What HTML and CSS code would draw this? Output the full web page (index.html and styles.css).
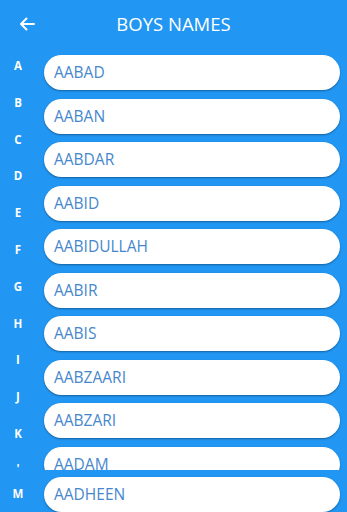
FILE: index.html
```html
<!DOCTYPE html>
<html>
<head>
<meta charset="utf-8">
<link rel="stylesheet" href="styles.css">
</head>
<body>
<div class="app">
  <header class="bar">
    <div class="back">
      <svg width="16" height="14" viewBox="0 0 16 14"><path d="M15 7H2M7.5 1.5L2 7l5.5 5.5" fill="none" stroke="#fff" stroke-width="2" stroke-linecap="round" stroke-linejoin="round"/></svg>
    </div>
    <h1 class="title">BOYS NAMES</h1>
    <div></div>
  </header>
  <div class="scroller">
    <div class="letters">
      <span>A</span><span>B</span><span>C</span><span>D</span><span>E</span><span>F</span><span>G</span><span>H</span><span>I</span><span>J</span><span>K</span><span class="cut">'</span>
    </div>
    <div class="list">
      <div class="card">AABAD</div>
      <div class="card">AABAN</div>
      <div class="card">AABDAR</div>
      <div class="card">AABID</div>
      <div class="card">AABIDULLAH</div>
      <div class="card">AABIR</div>
      <div class="card">AABIS</div>
      <div class="card">AABZAARI</div>
      <div class="card">AABZARI</div>
      <div class="card">AADAM</div>
    </div>
  </div>
  <div class="bottom">
    <div class="letters"><span>M</span></div>
    <div class="list"><div class="card">AADHEEN</div></div>
  </div>
</div>
</body>
</html>
```
FILE: styles.css
```css
html, body { margin: 0; padding: 0; }
body { background: #2196f3; font-family: "Open Sans", "Noto Sans", sans-serif; }
.app { width: 347px; height: 512px; overflow: hidden; }
.bar { height: 48px; display: grid; grid-template-columns: 1fr auto 1fr; align-items: center; }
.back { padding-left: 19px; display: flex; align-items: center; padding-bottom: 1px; }
.title { margin: 0; color: #fff; font-weight: 400; font-size: 18.5px; letter-spacing: 0; padding-bottom: 2px; }
.scroller { height: 422px; overflow: hidden; display: flex; }
.letters { width: 36px; display: flex; flex-direction: column; }
.letters span { height: 36.8px; line-height: 36.8px; text-align: center; color: #fff; font-weight: 700; font-size: 11.5px; }
.letters .cut { line-height: 32px; font-size: 11.5px; }
.list { flex: 1; display: flex; flex-direction: column; gap: 8.5px; padding-top: 7px; padding-left: 8px; padding-right: 7px; }
.card { height: 35px; flex: none; background: #fff; border-radius: 17.5px; box-shadow: 0 1px 2px rgba(0,0,0,0.35); color: #4687cc; font-size: 15.5px; line-height: 35px; padding-left: 10px; box-sizing: border-box; }
.bottom { display: flex; padding-top: 7px; }
.bottom .list { padding-top: 0; }
.bottom .letters span { height: 34px; line-height: 34px; }
```
